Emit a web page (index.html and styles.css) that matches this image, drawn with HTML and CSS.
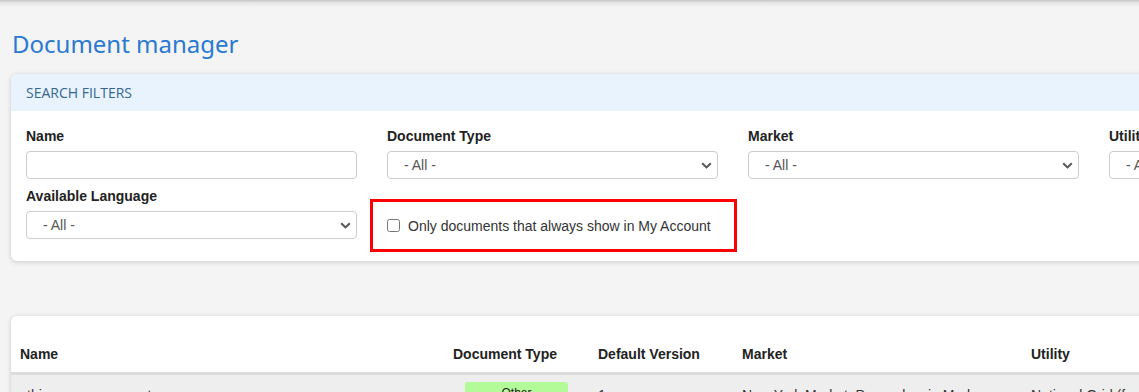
FILE: index.html
```html
<!DOCTYPE html>
<html lang="en">
    <head>
        <meta charset="UTF-8">
        <title>Document manager</title>
        <link rel="stylesheet" href="styles.css">
    </head>
    <body>
        <div class="top-shade"></div>
        <div class="page">
            <h1 class="title">Document manager</h1>

            <div class="card filters">
                <div class="card-header">SEARCH FILTERS</div>
                <div class="filter-grid">
                    <div class="field">
                        <label>Name</label>
                        <input type="text" class="control">
                    </div>
                    <div class="field">
                        <label>Document Type</label>
                        <div class="select-wrap">
                            <select class="control"><option>- All -</option></select>
                            <svg class="chevron" width="11" height="7" viewBox="0 0 11 7"><path d="M1.2 1.2 L5.5 5.4 L9.8 1.2" fill="none" stroke="#555" stroke-width="2"/></svg>
                        </div>
                    </div>
                    <div class="field">
                        <label>Market</label>
                        <div class="select-wrap">
                            <select class="control"><option>- All -</option></select>
                            <svg class="chevron" width="11" height="7" viewBox="0 0 11 7"><path d="M1.2 1.2 L5.5 5.4 L9.8 1.2" fill="none" stroke="#555" stroke-width="2"/></svg>
                        </div>
                    </div>
                    <div class="field">
                        <label>Utility</label>
                        <div class="select-wrap">
                            <select class="control"><option>- All -</option></select>
                            <svg class="chevron" width="11" height="7" viewBox="0 0 11 7"><path d="M1.2 1.2 L5.5 5.4 L9.8 1.2" fill="none" stroke="#555" stroke-width="2"/></svg>
                        </div>
                    </div>
                    <div class="field">
                        <label>Available Language</label>
                        <div class="select-wrap">
                            <select class="control"><option>- All -</option></select>
                            <svg class="chevron" width="11" height="7" viewBox="0 0 11 7"><path d="M1.2 1.2 L5.5 5.4 L9.8 1.2" fill="none" stroke="#555" stroke-width="2"/></svg>
                        </div>
                    </div>
                    <div class="check-field">
                        <input type="checkbox" id="alwaysShow">
                        <label for="alwaysShow">Only documents that always show in My Account</label>
                    </div>
                </div>
            </div>

            <div class="card results">
                <table class="doc-table">
                    <thead>
                        <tr>
                            <th class="col-name">Name</th>
                            <th class="col-type">Document Type</th>
                            <th class="col-version">Default Version</th>
                            <th class="col-market">Market</th>
                            <th class="col-utility">Utility</th>
                        </tr>
                    </thead>
                    <tbody>
                        <tr>
                            <td class="cell-name">this name was empty</td>
                            <td class="cell-type"><span class="badge">Other</span></td>
                            <td class="cell-version">1</td>
                            <td><div class="clip market-clip">New York Market, Pennsylvania Mark</div></td>
                            <td><div class="clip">National Grid (for</div></td>
                        </tr>
                    </tbody>
                </table>
            </div>
        </div>
    </body>
</html>
```

FILE: styles.css
```css
* {
    box-sizing: border-box;
}

html, body {
    margin: 0;
    overflow: hidden;
    background: #f4f4f4;
    font-family: "Liberation Sans", Arial, sans-serif;
    color: #222;
}

.top-shade {
    height: 7px;
    background: linear-gradient(#c4c4c4, #e6e6e6 40%, #f4f4f4);
}

.page {
    padding: 0 0 0 11px;
    width: 1520px;
}

.title {
    margin: 22px 0 15px 1px;
    font-family: "Noto Sans", sans-serif;
    font-weight: 400;
    font-size: 24px;
    line-height: 30px;
    color: #2a79d3;
}

.card {
    background: #fff;
    border-radius: 6px;
    box-shadow: 0 1px 5px rgba(0, 0, 0, 0.18);
    overflow: hidden;
}

.card-header {
    background: #e8f3fd;
    height: 37px;
    padding: 0 15px;
    line-height: 37px;
    font-family: "Open Sans", sans-serif;
    font-size: 14px;
    color: #346690;
}

.filter-grid {
    display: grid;
    grid-template-columns: repeat(4, 331px);
    column-gap: 30px;
    row-gap: 8px;
    padding: 16px 15px 9px 15px;
    align-items: start;
}

.field label {
    display: block;
    font-weight: bold;
    font-size: 14px;
    line-height: 18px;
    margin-bottom: 6px;
    color: #222;
}

.control {
    display: block;
    width: 100%;
    height: 28px;
    border: 1px solid #ccc;
    border-radius: 4px;
    background: #fff;
    font-family: "Liberation Sans", Arial, sans-serif;
    font-size: 14px;
    color: #555;
    padding: 0 8px;
    outline: none;
}

select.control {
    appearance: none;
    -webkit-appearance: none;
    padding-left: 16px;
}

.select-wrap {
    position: relative;
}

.chevron {
    position: absolute;
    right: 6px;
    top: 11px;
}

.check-field {
    display: flex;
    align-items: center;
    height: 53px;
    margin: 12px 0 0 -17px;
    width: 367px;
    border: 3px solid #f00;
    padding-left: 14px;
}

.check-field input {
    margin: 0 8px 0 0;
    width: 13px;
    height: 13px;
}

.check-field label {
    font-size: 14px;
    color: #333;
}

.results {
    margin-top: 55px;
    padding-top: 24px;
}

.doc-table {
    border-collapse: collapse;
    table-layout: fixed;
    width: 100%;
    font-size: 14px;
}

.doc-table th {
    text-align: left;
    font-weight: bold;
    padding: 6px 9px 9px 9px;
    line-height: 17px;
    border-bottom: 3px solid #ddd;
}

.doc-table td {
    background: #eee;
    padding: 7px 9px;
    font-size: 14px;
    color: #333;
    vertical-align: top;
}

.doc-table td.cell-name {
    padding-left: 16px;
}

.col-name { width: 433px; }
.col-type { width: 145px; }
.col-version { width: 144px; }
.col-market { width: 289px; }

.cell-type {
    text-align: center;
}

.badge {
    display: inline-block;
    width: 103px;
    padding: 4px 0;
    background: #b3fb98;
    border-radius: 3px;
    font-size: 12px;
    color: #222;
}

.clip {
    white-space: nowrap;
    overflow: hidden;
    padding-top: 5px;
}

.market-clip {
    max-width: 262px;
}

.doc-table td.cell-name,
.doc-table td.cell-version {
    padding-top: 12px;
}
```
